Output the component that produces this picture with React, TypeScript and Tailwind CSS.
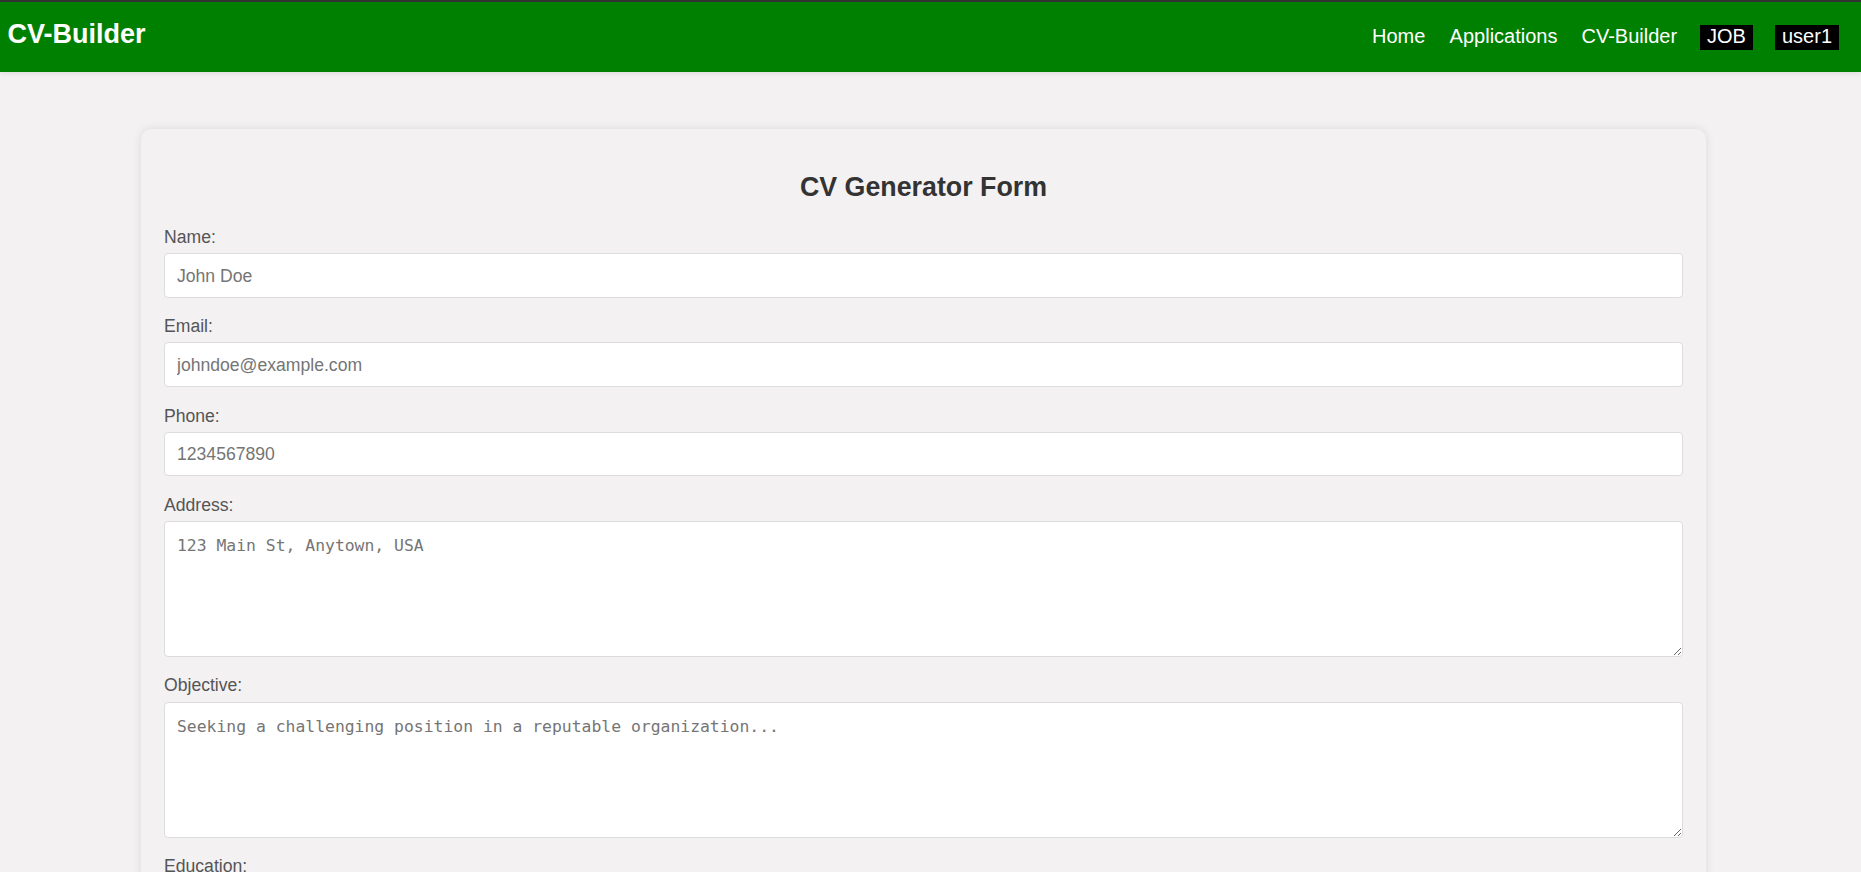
import { useState } from "react";

const fields = [
  { label: "Name:", name: "name", type: "input", placeholder: "John Doe" },
  { label: "Email:", name: "email", type: "input", placeholder: "johndoe@example.com" },
  { label: "Phone:", name: "phone", type: "input", placeholder: "1234567890" },
  { label: "Address:", name: "address", type: "textarea", placeholder: "123 Main St, Anytown, USA" },
  {
    label: "Objective:",
    name: "objective",
    type: "textarea",
    placeholder: "Seeking a challenging position in a reputable organization...",
  },
  { label: "Education:", name: "education", type: "textarea", placeholder: "B.Sc. in Computer Science, XYZ University, 2020" },
  { label: "Experience:", name: "experience", type: "textarea", placeholder: "Software Developer at ABC Corp, 2020 - Present" },
  { label: "Skills:", name: "skills", type: "textarea", placeholder: "JavaScript, React, Node.js" },
];

export default function App() {
  const [values, setValues] = useState<Record<string, string>>({});

  const update = (name: string, value: string) =>
    setValues({ ...values, [name]: value });

  return (
    <div className="min-h-screen bg-[#f3f1f2] font-['Liberation_Sans',Arial,sans-serif]">
      <div className="h-[2px] bg-[#333]" />
      <header className="h-[70px] bg-[#008000] flex justify-between items-start pl-[7.5px] pr-[22px] shadow-[0_2px_5px_rgba(0,0,0,0.08)] relative">
        <div className="mt-[16.5px] text-[27px] leading-[30px] font-bold text-white">
          CV-Builder
        </div>
        <nav className="mt-[23px] flex items-start text-[20px] text-white">
          <a className="leading-[22px] h-[25px]">Home</a>
          <a className="leading-[22px] h-[25px] ml-[24.3px]">Applications</a>
          <a className="leading-[22px] h-[25px] ml-[24px]">CV-Builder</a>
          <span className="leading-[22px] h-[25px] ml-[23px] px-[7px] bg-black">
            JOB
          </span>
          <span className="leading-[22px] h-[25px] ml-[22px] px-[7px] bg-black">
            user1
          </span>
        </nav>
      </header>

      <div className="ml-[141px] mt-[57px] w-[1565px] rounded-[10px] bg-[#f3f1f2] shadow-[0_0_10px_rgba(0,0,0,0.1)] px-[23px] pt-[23px] pb-[30px]">
        <h2 className="mt-[20px] text-center text-[26.8px] leading-[30px] font-bold text-[#333]">
          CV Generator Form
        </h2>
        <form className="mt-[25px] flex flex-col gap-[18.4px]">
          {fields.map((field) => (
            <div key={field.name} className="flex flex-col">
              <label className="text-[17.6px] leading-[20.2px] mb-[6px] text-[#555]">
                {field.label}
              </label>
              {field.type === "input" ? (
                <input
                  value={values[field.name] || ""}
                  onChange={(e) => update(field.name, e.target.value)}
                  placeholder={field.placeholder}
                  className="h-[44.7px] w-full rounded-[4px] border border-[#dcdcdc] bg-white px-[12px] pt-[1px] text-[17.6px] text-[#333] placeholder:text-[#757575] outline-none"
                />
              ) : (
                <textarea
                  value={values[field.name] || ""}
                  onChange={(e) => update(field.name, e.target.value)}
                  placeholder={field.placeholder}
                  className="h-[136px] w-full resize rounded-[4px] border border-[#dcdcdc] bg-white px-[12px] pt-[14px] font-['DejaVu_Sans_Mono',monospace] text-[16.4px] leading-[20px] text-[#333] placeholder:text-[#757575] outline-none"
                />
              )}
            </div>
          ))}
        </form>
      </div>
    </div>
  );
}
